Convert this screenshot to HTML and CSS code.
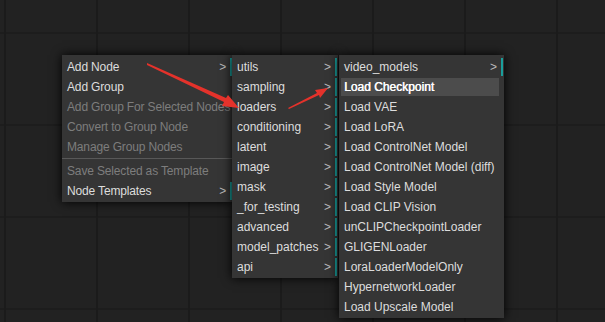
FILE: index.html
```html
<!DOCTYPE html>
<html lang="en">
<head>
    <meta charset="UTF-8">
    <title>Context Menu</title>
    <link rel="stylesheet" href="styles.css">
</head>
<body>
    <div class="canvas">
        <div class="litemenu main-menu">
            <div class="entry submenu">Add Node<span class="caret">&gt;</span></div>
            <div class="entry">Add Group</div>
            <div class="entry disabled">Add Group For Selected Nodes</div>
            <div class="entry disabled">Convert to Group Node</div>
            <div class="entry disabled">Manage Group Nodes</div>
            <div class="separator"></div>
            <div class="entry disabled">Save Selected as Template</div>
            <div class="entry submenu">Node Templates<span class="caret">&gt;</span></div>
        </div>

        <div class="litemenu category-menu">
            <div class="entry submenu">utils<span class="caret">&gt;</span></div>
            <div class="entry submenu">sampling<span class="caret">&gt;</span></div>
            <div class="entry submenu">loaders<span class="caret">&gt;</span></div>
            <div class="entry submenu">conditioning<span class="caret">&gt;</span></div>
            <div class="entry submenu">latent<span class="caret">&gt;</span></div>
            <div class="entry submenu">image<span class="caret">&gt;</span></div>
            <div class="entry submenu">mask<span class="caret">&gt;</span></div>
            <div class="entry submenu">_for_testing<span class="caret">&gt;</span></div>
            <div class="entry submenu">advanced<span class="caret">&gt;</span></div>
            <div class="entry submenu">model_patches<span class="caret">&gt;</span></div>
            <div class="entry submenu">api<span class="caret">&gt;</span></div>
        </div>

        <div class="litemenu loader-menu">
            <div class="entry submenu">video_models<span class="caret">&gt;</span></div>
            <div class="entry hover">Load Checkpoint</div>
            <div class="entry">Load VAE</div>
            <div class="entry">Load LoRA</div>
            <div class="entry">Load ControlNet Model</div>
            <div class="entry">Load ControlNet Model (diff)</div>
            <div class="entry">Load Style Model</div>
            <div class="entry">Load CLIP Vision</div>
            <div class="entry">unCLIPCheckpointLoader</div>
            <div class="entry">GLIGENLoader</div>
            <div class="entry">LoraLoaderModelOnly</div>
            <div class="entry">HypernetworkLoader</div>
            <div class="entry">Load Upscale Model</div>
        </div>

        <!-- annotation arrows -->
        <svg class="arrows" width="605" height="322" viewBox="0 0 605 322">
            <polygon points="147,63 226,98 228,95 239,108 222,106 224,102 147,65" fill="#e4322b"/>
            <polygon points="288,108 317,93 315,90 328,88 320,98 319,95 289,109" fill="#e4322b"/>
        </svg>
    </div>
</body>
</html>
```

FILE: styles.css
```css
body {
    margin: 0;
    padding: 0;
    background-color: #222;
    font-family: Tahoma, "Liberation Sans", Arial, sans-serif;
}
.canvas {
    position: relative;
    width: 605px;
    height: 322px;
    overflow: hidden;
    background-color: #222;
    background-image:
        linear-gradient(to right, #1b1b1b 2px, transparent 2px),
        linear-gradient(to bottom, #1d1d1d 2px, transparent 2px);
    background-size: 92px 92px;
    background-position: 4px 32px;
}
.litemenu {
    position: absolute;
    box-sizing: border-box;
    background-color: #353535;
    box-shadow: 0 0 10px #000;
    padding: 1px 0;
    font-size: 12px;
    color: #ddd;
}
.main-menu {
    left: 62px;
    top: 55px;
    width: 171px;
    height: 147px;
    letter-spacing: -0.15px;
}
.category-menu {
    left: 232px;
    top: 55px;
    width: 106px;
    height: 223px;
}
.loader-menu {
    left: 339px;
    top: 55px;
    width: 165px;
    height: 263px;
}
.entry {
    position: relative;
    margin: 2px 3px 2px 2px;
    padding: 0 3px;
    height: 18px;
    line-height: 18px;
    white-space: nowrap;
}
.entry.submenu {
    border-right: 2px solid #1a9e9b;
    margin-right: 1px;
}
.entry.disabled {
    color: #7d7d7d;
}
.entry.hover {
    background-color: #4c4c4c;
    color: #fff;
    text-shadow: 0.4px 0 0 #fff;
    margin-right: 5px;
}
.caret {
    position: absolute;
    right: 4px;
    top: 0;
    color: #bbb;
}
.separator {
    height: 1px;
    margin: 2px 0 2px;
    background-color: #585858;
}
.main-menu .separator {
    margin: 2px 0 3px;
}
.arrows {
    position: absolute;
    left: 0;
    top: 0;
}
```
